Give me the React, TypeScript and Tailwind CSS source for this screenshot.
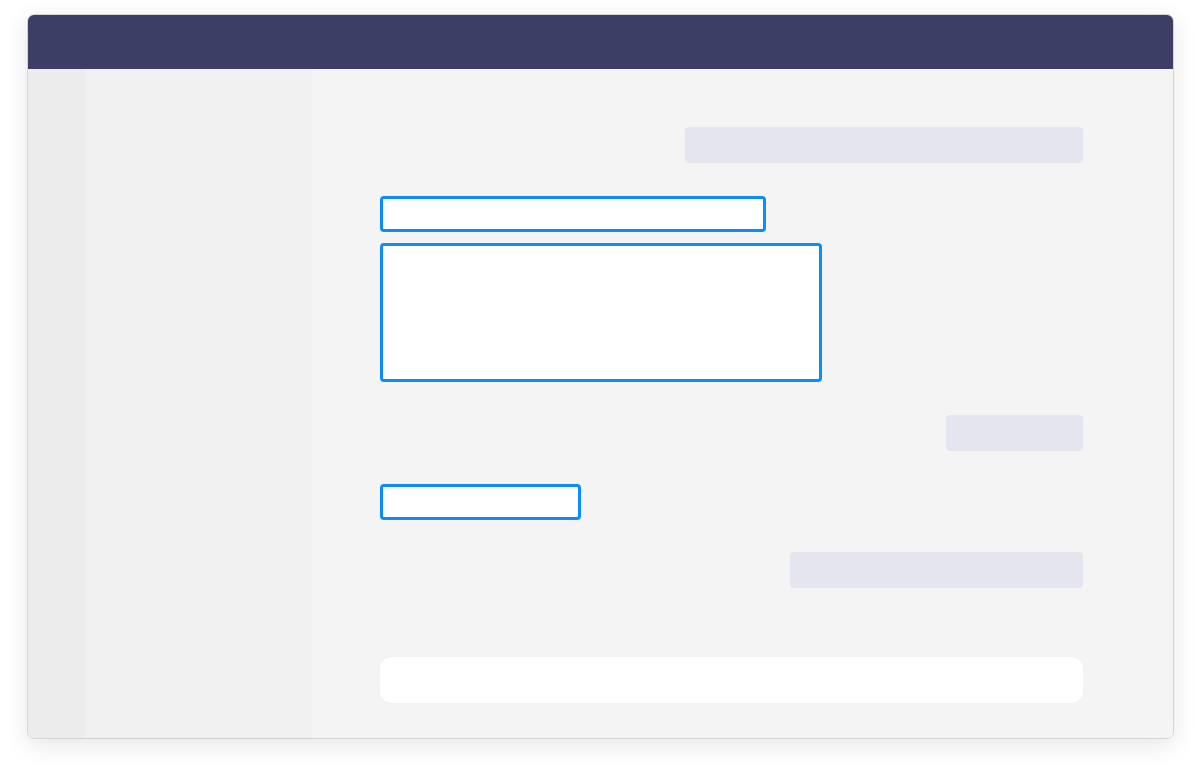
import React from "react";

export default function App() {
  return (
    <div className="w-[1200px] h-[777px] bg-white pt-[14px] pl-[27px]">
      <div className="w-[1147px] h-[725px] rounded-[7px] overflow-hidden flex flex-col border border-[#d4d4d8] shadow-[0_6px_24px_rgba(0,0,0,0.10)]">
        <div className="h-[54px] shrink-0 bg-[#3d3e66]" />
        <div className="flex flex-1">
          <div className="w-[57px] bg-[#ececec]" />
          <div className="w-[227px] bg-[#f0f0f0]" />
          <div className="flex-1 bg-[#f4f4f4] pl-[68px] pr-[90px] pt-[58px] flex flex-col">
            <div className="flex justify-end">
              <div className="w-[398px] h-[36px] rounded-[4px] bg-[#e5e5f0]" />
            </div>
            <div className="mt-[33px] w-[386px] h-[36px] rounded-[4px] border-[3px] border-[#0b8dff] bg-white" />
            <div className="mt-[11px] w-[442px] h-[139px] rounded-[4px] border-[3px] border-[#0b8dff] bg-white" />
            <div className="mt-[33px] flex justify-end">
              <div className="w-[137px] h-[36px] rounded-[4px] bg-[#e5e5f0]" />
            </div>
            <div className="mt-[33px] w-[201px] h-[36px] rounded-[4px] border-[3px] border-[#0b8dff] bg-white" />
            <div className="mt-[32px] flex justify-end">
              <div className="w-[293px] h-[36px] rounded-[4px] bg-[#e5e5f0]" />
            </div>
            <div className="mt-[69px] w-[703px] h-[46px] rounded-[12px] bg-white" />
          </div>
        </div>
      </div>
    </div>
  );
}
